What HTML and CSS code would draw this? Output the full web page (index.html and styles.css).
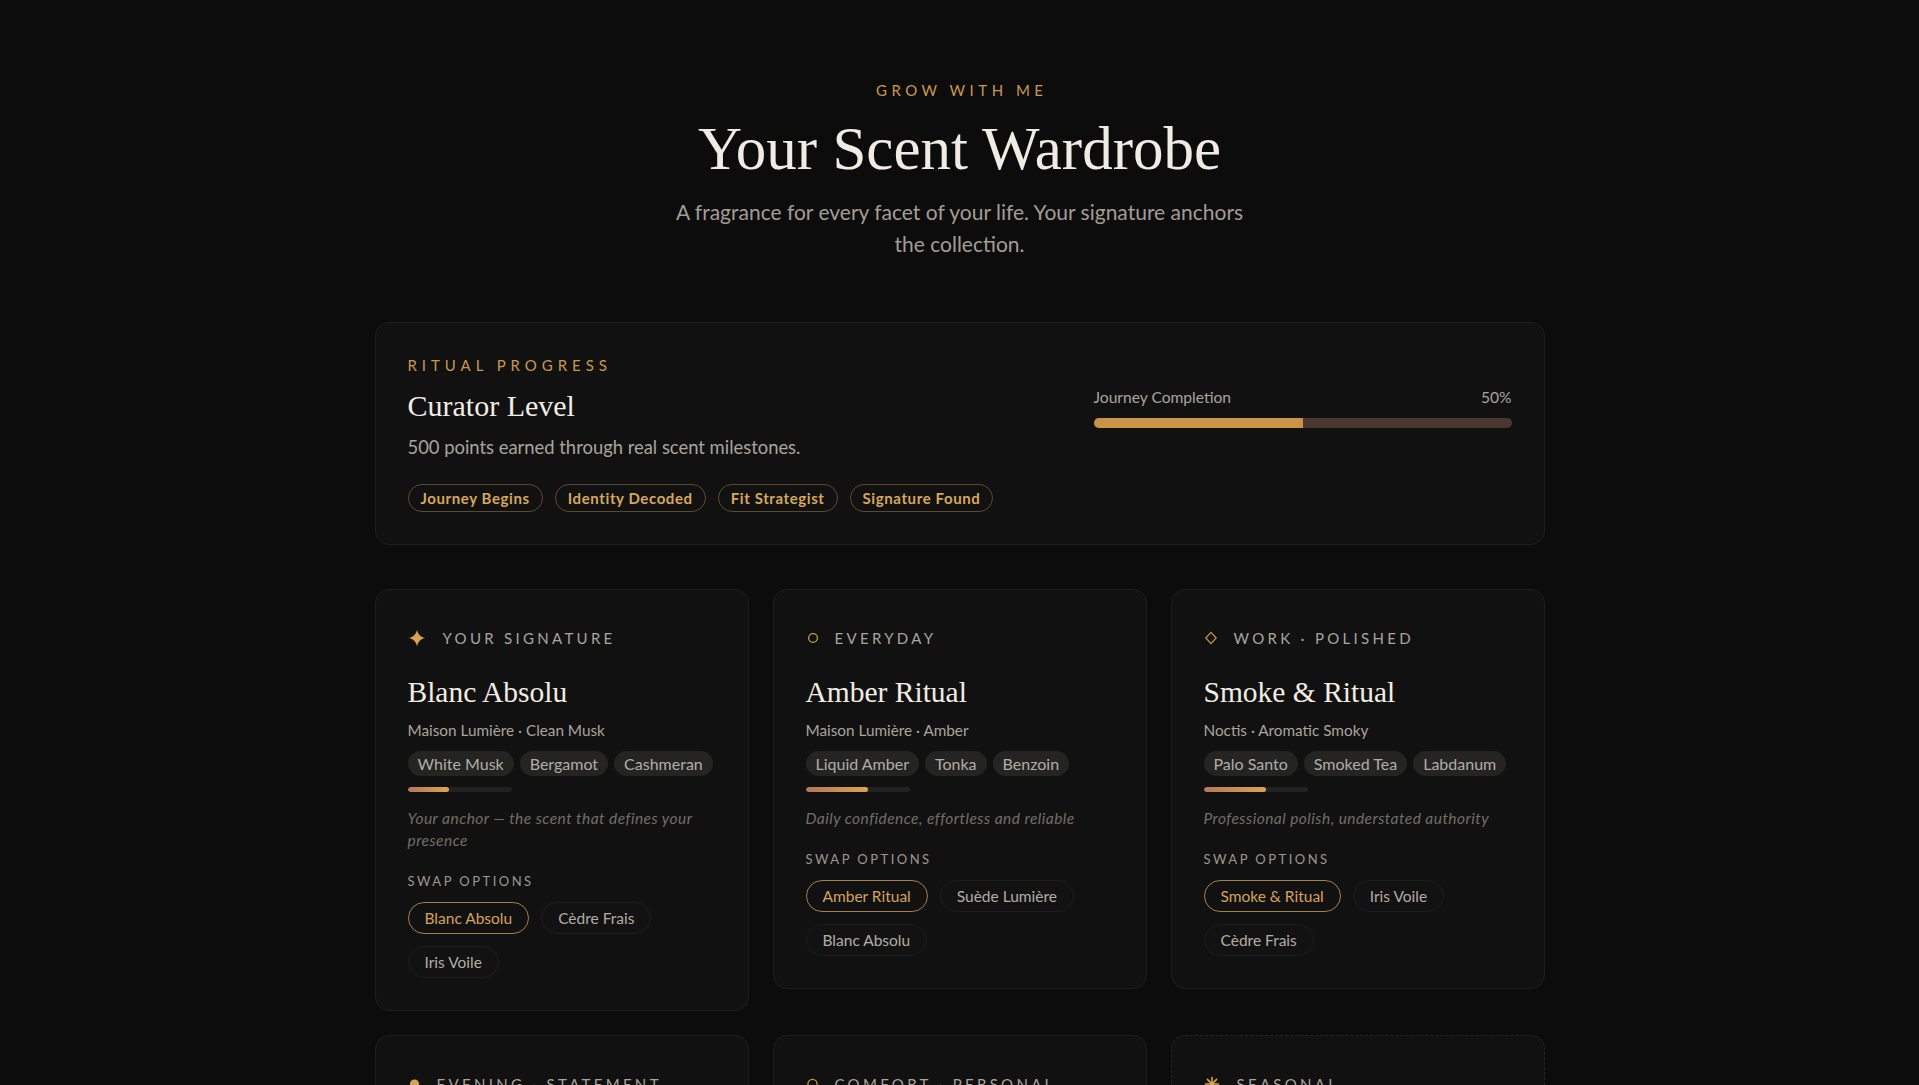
FILE: index.html
```html
<!DOCTYPE html>
<html lang="en">
<head>
<meta charset="utf-8">
<title>Your Scent Wardrobe</title>
<link rel="stylesheet" href="styles.css">
</head>
<body>
<main class="wardrobe">
  <header class="intro">
    <p class="eyebrow">Grow with me</p>
    <h1 class="title">Your Scent Wardrobe</h1>
    <p class="lede">A fragrance for every facet of your life. Your signature anchors the collection.</p>
  </header>

  <section class="progress-card">
    <div class="progress-top">
      <div class="progress-info">
        <p class="kicker">Ritual Progress</p>
        <h2 class="level">Curator Level</h2>
        <p class="points">500 points earned through real scent milestones.</p>
      </div>
      <div class="completion">
        <div class="completion-head"><span>Journey Completion</span><span>50%</span></div>
        <div class="completion-track"><div class="completion-fill" style="width:50%"></div></div>
      </div>
    </div>
    <ul class="badges">
      <li class="badge">Journey Begins</li>
      <li class="badge">Identity Decoded</li>
      <li class="badge">Fit Strategist</li>
      <li class="badge">Signature Found</li>
    </ul>
  </section>

  <section class="slots">
    <article class="slot">
      <div class="slot-label">
        <svg class="slot-icon" width="18" height="18" viewBox="0 0 18 18"><path d="M9 0.5C9.7 5.2 12.8 8.3 17.5 9C12.8 9.7 9.7 12.8 9 17.5C8.3 12.8 5.2 9.7 0.5 9C5.2 8.3 8.3 5.2 9 0.5Z" fill="#d9a44f"/></svg>
        <span>Your Signature</span>
      </div>
      <h3 class="slot-name">Blanc Absolu</h3>
      <p class="slot-meta">Maison Lumière · Clean Musk</p>
      <ul class="notes"><li>White Musk</li><li>Bergamot</li><li>Cashmeran</li></ul>
      <div class="intensity"><div class="intensity-fill" style="width:40%"></div></div>
      <p class="slot-note">Your anchor — the scent that defines your presence</p>
      <p class="swap-label">Swap Options</p>
      <ul class="swaps"><li class="swap is-active">Blanc Absolu</li><li class="swap">Cèdre Frais</li><li class="swap">Iris Voile</li></ul>
    </article>

    <article class="slot">
      <div class="slot-label">
        <svg class="slot-icon" width="12" height="18" viewBox="0 0 12 18"><circle cx="7" cy="9" r="4.4" fill="none" stroke="#c9984e" stroke-width="1.3"/></svg>
        <span>Everyday</span>
      </div>
      <h3 class="slot-name">Amber Ritual</h3>
      <p class="slot-meta">Maison Lumière · Amber</p>
      <ul class="notes"><li>Liquid Amber</li><li>Tonka</li><li>Benzoin</li></ul>
      <div class="intensity"><div class="intensity-fill" style="width:60%"></div></div>
      <p class="slot-note">Daily confidence, effortless and reliable</p>
      <p class="swap-label">Swap Options</p>
      <ul class="swaps"><li class="swap is-active">Amber Ritual</li><li class="swap">Suède Lumière</li><li class="swap">Blanc Absolu</li></ul>
    </article>

    <article class="slot">
      <div class="slot-label">
        <svg class="slot-icon" width="13" height="18" viewBox="0 0 13 18"><path d="M7 3.3L12.2 9L7 14.7L1.8 9Z" fill="none" stroke="#c9984e" stroke-width="1.2"/></svg>
        <span>Work · Polished</span>
      </div>
      <h3 class="slot-name">Smoke &amp; Ritual</h3>
      <p class="slot-meta">Noctis · Aromatic Smoky</p>
      <ul class="notes"><li>Palo Santo</li><li>Smoked Tea</li><li>Labdanum</li></ul>
      <div class="intensity"><div class="intensity-fill" style="width:60%"></div></div>
      <p class="slot-note">Professional polish, understated authority</p>
      <p class="swap-label">Swap Options</p>
      <ul class="swaps"><li class="swap is-active">Smoke &amp; Ritual</li><li class="swap">Iris Voile</li><li class="swap">Cèdre Frais</li></ul>
    </article>

    <article class="slot">
      <div class="slot-label">
        <svg class="slot-icon" width="12" height="18" viewBox="0 0 12 18"><circle cx="6.5" cy="9" r="4.6" fill="#d9a44f"/></svg>
        <span>Evening · Statement</span>
      </div>
      <h3 class="slot-name">Velours Noir</h3>
      <p class="slot-meta">Noctis · Woody Oriental</p>
      <ul class="notes"><li>Oud</li><li>Black Rose</li><li>Saffron</li></ul>
      <div class="intensity"><div class="intensity-fill" style="width:80%"></div></div>
      <p class="slot-note">Magnetic presence for the nights that matter</p>
      <p class="swap-label">Swap Options</p>
      <ul class="swaps"><li class="swap is-active">Velours Noir</li><li class="swap">Smoke &amp; Ritual</li><li class="swap">Amber Ritual</li></ul>
    </article>

    <article class="slot">
      <div class="slot-label">
        <svg class="slot-icon" width="12" height="18" viewBox="0 0 12 18"><circle cx="6.5" cy="9" r="4.6" fill="none" stroke="#c9984e" stroke-width="1.3"/></svg>
        <span>Comfort · Personal</span>
      </div>
      <h3 class="slot-name">Suède Lumière</h3>
      <p class="slot-meta">Maison Lumière · Soft Leather</p>
      <ul class="notes"><li>Suede</li><li>Iris</li><li>Vanilla</li></ul>
      <div class="intensity"><div class="intensity-fill" style="width:40%"></div></div>
      <p class="slot-note">A quiet embrace, just for you</p>
      <p class="swap-label">Swap Options</p>
      <ul class="swaps"><li class="swap is-active">Suède Lumière</li><li class="swap">Blanc Absolu</li><li class="swap">Iris Voile</li></ul>
    </article>

    <article class="slot slot--open">
      <div class="slot-label">
        <svg class="slot-icon" width="16" height="18" viewBox="0 0 16 18"><g stroke="#d9a44f" stroke-width="1.6" stroke-linecap="round"><path d="M8 2.5V15.5"/><path d="M1.5 9H14.5"/><path d="M3.4 4.4L12.6 13.6"/><path d="M12.6 4.4L3.4 13.6"/></g><circle cx="8" cy="9" r="2" fill="#d9a44f"/></svg>
        <span>Seasonal</span>
      </div>
      <h3 class="slot-name">Open Slot</h3>
      <p class="slot-meta">Discover a scent for the season ahead</p>
      <p class="slot-note">Unlock at Connoisseur Level</p>
    </article>
  </section>
</main>
</body>
</html>
```
FILE: styles.css
```css
* { box-sizing: border-box; }

body {
  margin: 0;
  background: #0c0c0c;
  color: #e8e2d8;
  font-family: Lato, "Noto Sans", sans-serif;
}

.wardrobe {
  max-width: 1170px;
  margin: 0 auto;
  padding: 80px 0 96px;
}

/* Intro */
.intro { text-align: center; }

.eyebrow {
  margin: 0;
  padding-left: 0.3em;
  font-size: 15px;
  line-height: 20px;
  letter-spacing: 0.3em;
  text-transform: uppercase;
  color: #c9984e;
}

.title {
  margin: 16px 0 0;
  font-family: "Liberation Serif", serif;
  font-weight: 400;
  font-size: 61px;
  line-height: 66px;
  color: #f0ebe3;
}

.lede {
  margin: 14px auto 0;
  max-width: 596px;
  font-size: 21px;
  line-height: 32px;
  color: #a39d95;
}

/* Progress card */
.progress-card {
  margin-top: 62px;
  padding: 32px;
  background: #111111;
  border: 1px solid #1f1f1f;
  border-radius: 14px;
}

.progress-top {
  display: flex;
  align-items: center;
  justify-content: space-between;
  gap: 40px;
}

.kicker {
  margin: 0;
  font-size: 15px;
  line-height: 20px;
  letter-spacing: 0.33em;
  text-transform: uppercase;
  color: #c9984e;
}

.level {
  margin: 12px 0 0;
  font-family: "Liberation Serif", serif;
  font-weight: 400;
  font-size: 30px;
  line-height: 38px;
  color: #f2ede4;
}

.points {
  margin: 10px 0 0;
  font-size: 18.4px;
  line-height: 24px;
  color: #aaa49c;
}

.completion { width: 418px; }

.completion-head {
  display: flex;
  justify-content: space-between;
  margin-bottom: 11px;
  font-size: 15.6px;
  line-height: 20px;
  color: #aaa49c;
}

.completion-track {
  height: 10px;
  border-radius: 5px;
  background: #4a3830;
  overflow: hidden;
}

.completion-fill {
  height: 100%;
  background: #c99446;
}

.badges {
  display: flex;
  gap: 12px;
  margin: 25px 0 0;
  padding: 0;
  list-style: none;
}

.badge {
  padding: 3px 12px;
  font-size: 15px;
  font-weight: 700;
  line-height: 20px;
  letter-spacing: 0.6px;
  color: #d8a75a;
  border: 1px solid rgba(201, 152, 78, 0.42);
  border-radius: 999px;
}

/* Wardrobe slots */
.slots {
  display: grid;
  grid-template-columns: repeat(3, 1fr);
  gap: 24px;
  align-items: start;
  margin-top: 44px;
}

.slot {
  padding: 32px;
  background: #111111;
  border: 1px solid #1f1f1f;
  border-radius: 14px;
}

.slot--open { border-style: dashed; border-color: #262626; }

.slot-label {
  display: flex;
  align-items: center;
  gap: 17px;
  height: 32px;
  font-size: 15px;
  letter-spacing: 0.22em;
  text-transform: uppercase;
  color: #aaa49c;
}

.slot-icon { flex: none; display: block; }

.slot-name {
  margin: 21px 0 0;
  font-family: "Liberation Serif", serif;
  font-weight: 400;
  font-size: 29.5px;
  line-height: 35px;
  color: #f2ede4;
}

.slot-meta {
  margin: 9px 0 0;
  font-size: 15.3px;
  line-height: 22px;
  color: #aaa49c;
}

.notes {
  display: flex;
  flex-wrap: wrap;
  gap: 6px;
  margin: 10px 0 0;
  padding: 0;
  list-style: none;
}

.notes li {
  padding: 3px 10px;
  font-size: 16px;
  line-height: 19px;
  color: #b3ada5;
  background: #242423;
  border-radius: 999px;
}

.intensity {
  width: 104px;
  height: 5px;
  margin-top: 11px;
  border-radius: 3px;
  background: #222222;
  overflow: hidden;
}

.intensity-fill {
  height: 100%;
  border-radius: 3px;
  background: linear-gradient(90deg, #b4775c, #d8a54f);
}

.slot-note {
  margin: 15px 0 0;
  font-style: italic;
  font-size: 15.5px;
  line-height: 22px;
  letter-spacing: 0.45px;
  color: #736e67;
}

.swap-label {
  margin: 21px 0 0;
  font-size: 13px;
  line-height: 18px;
  letter-spacing: 0.19em;
  text-transform: uppercase;
  color: #9d978f;
}

.swaps {
  display: flex;
  flex-wrap: wrap;
  gap: 12px;
  margin: 12px 0 0;
  padding: 0;
  list-style: none;
}

.swap {
  padding: 5px 16px;
  font-size: 15.5px;
  line-height: 20px;
  color: #b3ada5;
  background: #121212;
  border: 1px solid #1d1d1d;
  border-radius: 999px;
}

.swap.is-active {
  color: #d6a35a;
  border-color: #a57d45;
  background: transparent;
}
```
